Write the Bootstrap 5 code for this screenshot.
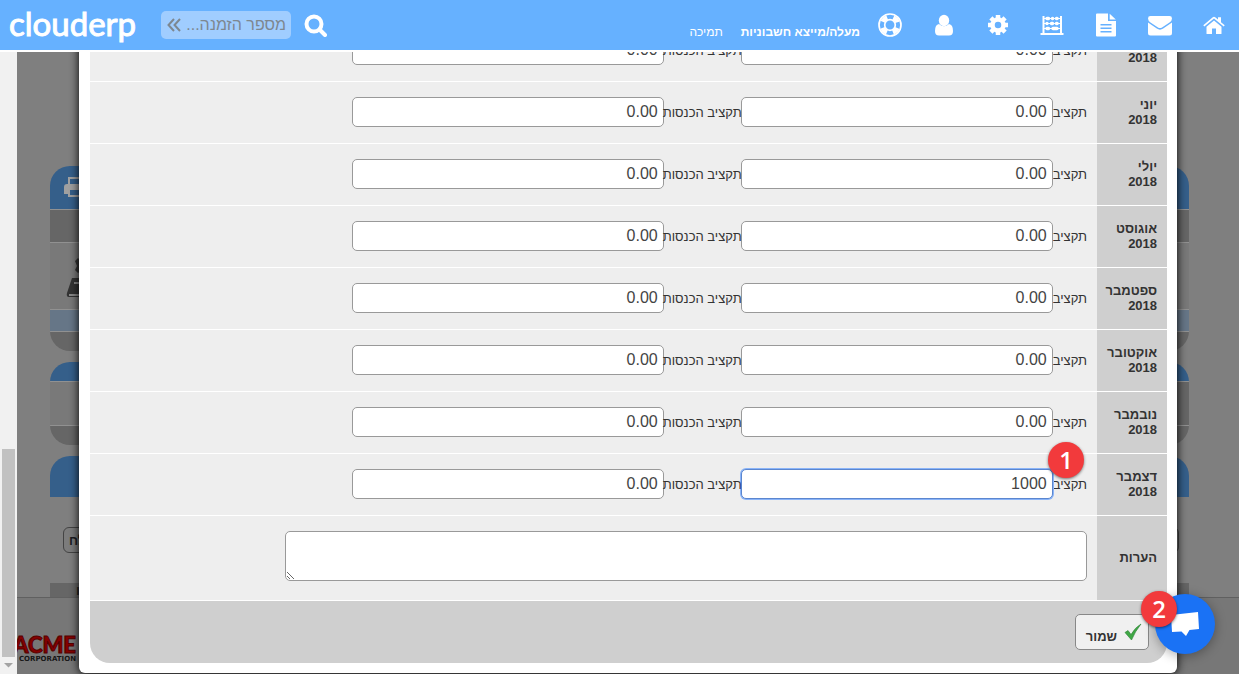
<!DOCTYPE html>
<html lang="he" dir="rtl">
<head>
<meta charset="utf-8">
<meta name="viewport" content="width=device-width, initial-scale=1">
<title>clouderp</title>
<link rel="stylesheet" href="https://cdn.jsdelivr.net/npm/bootstrap@5.3.0/dist/css/bootstrap.min.css">
<style>
body{font-family:"Liberation Sans",Arial,sans-serif;font-size:13px;line-height:15px;color:#333;background:#fff}
a{color:inherit;text-decoration:none}
.topbar{height:50px;background:#66b1ff;color:#fff;margin-bottom:2px;padding:0 13px 0 9px}
.icons{gap:30px}
.icons svg{width:24px;height:24px;display:block}
.menu-links{gap:18px;margin-right:18px;padding-top:14px;font-size:12px}
.find{gap:12px}
.find-box{width:130px;height:28px;background:#a0cdff;border-radius:5px;padding:0 5px;color:#7d8790}
.find-box input{border:0;background:transparent;font-size:16px;line-height:20px;padding:0;min-width:0;width:100px;color:#7d8790;outline:0}
.find-box input::placeholder{color:#7d8790;opacity:1}
.find-box button,.find-go{border:0;background:transparent;padding:0;color:inherit}
.logo{font:400 33px/40px Lato,sans-serif;-webkit-text-stroke:1px #fff;margin-right:26px;width:126px;padding-bottom:4px}
.scroll-area{min-height:0}
.scroll-track{width:17px;background:#f1f1f1;padding:0 2px}
.scroll-thumb{width:13px;height:208px;background:#c1c1c1}
.stage{background:#7f7f7f;display:grid;grid-template:minmax(0,1fr)/minmax(0,1fr);min-width:0}
.stage>*{grid-area:1/1;min-height:0}
.behind{padding-top:114px}
.panel{margin:0 50px 11px 33px;border-radius:20px;overflow:hidden}
.panel>div{border-bottom:1px solid #919191;background:#797979}
.panel>div:last-child{border:0}
.panel .blue{background:#355f8a;color:#a0a0a0}
.panel .dark,.dark-half{background:#666}
.panel .pale{background:#667687}
.panel.open-end{border-radius:20px 20px 0 0;margin-bottom:0}
.h-head{height:44px;padding-left:14px}.h-sub{height:33px}.h-body{height:67px}.h-strip{height:22px}.h-foot{height:19px}
.h-cap{height:20px}.h-mid{height:44px}.h-top{height:41px}
.ghost-btn{height:26px;border:1px solid #444;border-radius:6px;background:#7c7c7c;font-weight:bold;padding:0 5px;margin:30px 60px 30px 46px;color:#1d1d22}
.ghost-bar{height:14px;background:#666;margin:0 50px 0 33px;padding:0 26px;color:#222;font-weight:bold}
.ghost-foot{border-top:1px solid #606060;background:#777}
.acme{width:59px;padding-top:36px}
.acme b{display:block;font:900 22px/21px Lato,sans-serif;color:#850000;-webkit-text-stroke:1px #500}
.acme small{display:block;font:bold 7px/8px "DejaVu Sans",sans-serif;color:#171717}
.dialog-wrap{padding:0 62px 1px;overflow:hidden}
.dialog-box{background:#fff;border-radius:0 0 6px 6px;padding:0 10px 10px 11px;box-shadow:0 1px 10px #000}
.budget{width:100%;border-collapse:separate;border-spacing:0;table-layout:fixed}
.budget .month-col{width:70px}
.budget th{background:#cfcfcf;padding:0 10px 2px 6px;border-bottom:1px solid #fff;font-weight:bold;vertical-align:middle}
.budget td{background:#eee;padding:0 10px 2px;border-bottom:1px solid #fff;vertical-align:middle;position:relative}
.budget tr{height:62px}
.budget tr.notes{height:85px}
.budget .notes td{padding-bottom:4px}
.budget td label{white-space:nowrap;padding-top:2px}
.budget .money+label{margin:0 -1px;position:relative}
.money{width:312px;height:30px;border:1px solid #999;border-radius:5px;padding:0 5px;font-size:16px;line-height:20px;color:#444;background:#fff;text-align:right;direction:ltr;min-width:0;outline:0}
.money.current{border-color:#5b86cf;box-shadow:0 0 0 1px #8ab4f8}
.budget textarea{display:block;width:802px;max-width:100%;height:50px;border:1px solid #999;border-radius:5px;background:#fff;outline:0}
.save-bar{background:#cfcfcf;border-radius:0 0 20px 20px;height:62px;padding:0 18px}
.save{height:36px;border:1px solid #888;border-radius:5px;background:#f0f0f0;font-weight:bold;padding:0 6px 0 10px;gap:7px;color:#333}
.save span{padding-top:8px}
.step{position:absolute;width:36px;height:36px;border-radius:50%;background:#f23a3c;color:#fff;font:600 24px/36px "Open Sans",sans-serif;text-align:center;box-shadow:0 1px 3px #0008;z-index:3}
.step-one{right:13px;top:-12px}
.chat{position:absolute;right:24px;bottom:20px;width:60px;height:60px;border:0;border-radius:50%;background:#1a72f5;box-shadow:0 2px 12px #0005;padding:0;z-index:2}
.step-two{left:-14px;top:-3px}
</style>
</head>
<body class="vh-100 d-flex flex-column overflow-hidden">
<header class="topbar d-flex align-items-center flex-shrink-0">
  <nav class="icons d-flex align-items-center" aria-label="ראשי">
    <a href="#" aria-label="בית"><svg viewBox="0 0 24 24" fill="#fff"><path d="M12 7.500 19.500 13.700V20.500Q19.500 21 19 21H14V15.500H10V21H5Q4.500 21 4.500 20.500V13.700ZM1.300 12.200 10.800 4.300Q12 3.400 13.200 4.300L16 6.600V4.200H19V9.200L22.700 12.200 21.700 13.400 12 5.600 2.300 13.400Z"/></svg></a>
    <a href="#" aria-label="דואר"><svg viewBox="0 0 24 24" fill="#fff"><path d="M2.500 3h19Q24 3 24 5.400 24 7.700 21.500 9.400L14 14.500Q12 15.700 10 14.500L2.500 9.400Q0 7.500 0 5.400 0 3 2.500 3ZM0 9.500 8.800 15.600Q12 17.900 15.200 15.600L24 9.500V20Q24 22.500 21.500 22.500h-19Q0 22.500 0 20Z"/></svg></a>
    <a href="#" aria-label="מסמכים"><svg viewBox="0 0 24 24" fill="#fff"><path fill-rule="evenodd" d="M2 1.500Q2 .5 3 .5h11v7.500h8v14.500q0 1-1 1H3q-1 0-1-1ZM15.700.700 21.800 6.600H15.700ZM6.500 11v1.500h11V11Zm0 3.500V16h11v-1.500Zm0 3.500v1.500h11V18Z"/></svg></a>
    <a href="#" aria-label="הנהלת חשבונות"><svg viewBox="0 0 24 24" fill="none" stroke="#fff"><path stroke-width="2" d="M3.500 3v18M21 3v18M.5 21h23"/><path d="M3 5.500h18M3 10.500h18M3 15.500h18"/><path stroke-width="3.400" stroke-linecap="round" d="M7 5.500h1.500M12.500 5.500h.1M16.500 5.500h.6M7 10.500h0M11.500 10.500h1M16.500 10.500h.6M7 15.500h1.500M13 15.500h4"/></svg></a>
    <a href="#" aria-label="הגדרות"><svg viewBox="0 0 24 24" fill="none" stroke="#fff"><circle cx="12" cy="12" r="5.500" stroke-width="4.500"/><path stroke-width="4.500" d="M12 2v3M12 19v3M2 12h3M19 12h3M4.900 4.900 7 7M17 17l2.100 2.100M4.900 19.100 7 17M17 7l2.100-2.100"/></svg></a>
    <a href="#" aria-label="משתמש"><svg viewBox="0 0 24 24" fill="#fff"><ellipse cx="12" cy="7.500" rx="5.200" ry="5.700"/><path d="M7 11q5 4.500 10 0 4 .7 4 7 0 4.500-4 4.500H7q-4 0-4-4.500 0-6.300 4-7Z"/></svg></a>
    <a href="#" aria-label="עזרה"><svg viewBox="0 0 24 24" fill="none" stroke="#fff"><circle cx="12" cy="12" r="11" stroke-width="1.700"/><circle cx="12" cy="12" r="5.300" stroke-width="1.700"/><circle cx="12" cy="12" r="8" stroke-width="5" stroke-dasharray="6.300 6.260" stroke-dashoffset="-3.150"/></svg></a>
  </nav>
  <nav class="menu-links d-flex" aria-label="קישורים"><a href="#"><b>מעלה/מייצא חשבוניות</b></a><a href="#">תמיכה</a></nav>
  <form class="find d-flex align-items-center me-auto">
    <button type="button" class="find-go" aria-label="חיפוש"><svg class="d-block" width="24" height="24" viewBox="0 0 24 24" fill="none" stroke="#fff" stroke-width="4"><circle cx="11" cy="11" r="7.500"/><path stroke-linecap="round" d="m17 17 5 5"/></svg></button>
    <div class="find-box d-flex align-items-center justify-content-between"><input type="text" aria-label="מספר הזמנה" placeholder="מספר הזמנה..."><button type="button" aria-label="הבא"><svg class="d-block" width="16" height="16" viewBox="0 0 16 16" fill="none" stroke="currentColor" stroke-width="2"><path d="M8 2 2.500 8 8 14M14 2 8.500 8 14 14"/></svg></button></div>
  </form>
  <a href="#" class="logo text-start" dir="ltr">clouderp</a>
</header>

<div class="scroll-area d-flex flex-grow-1" dir="ltr">
  <div class="scroll-track d-flex flex-column justify-content-end flex-shrink-0"><div class="scroll-thumb"></div><svg width="13" height="17" viewBox="0 0 13 17"><path d="M2 6h9l-4.500 4.500Z" fill="#a3a3a3"/></svg></div>
  <main class="stage flex-grow-1 position-relative">
    <div class="behind d-flex flex-column overflow-hidden" aria-hidden="true">
      <div class="panel flex-shrink-0">
        <div class="blue h-head d-flex align-items-center"><svg width="30" height="24" viewBox="0 0 30 24"><path fill="none" stroke="#a0a0a0" stroke-width="2" d="M5 10V2h12l4 4v4M5 14v6h16v-6"/><path fill="#a0a0a0" d="M0 11q0-3 3-3h20q3 0 3 3v7h-4v-4H4v4H0Z"/></svg></div>
        <div class="dark h-sub"></div>
        <div class="h-body"><svg class="d-block" width="60" height="66" viewBox="0 0 60 66"><path fill="#333" d="m25 18 3-3 4 4v8l-4 3-3-3 2-4ZM22 35h20v19H19q-3 0-2-4Z"/><path stroke="#888" stroke-width="2" d="M24 40h14M19 52h22"/></svg></div>
        <div class="pale h-strip"></div>
        <div class="dark h-foot"></div>
      </div>
      <div class="panel flex-shrink-0">
        <div class="blue h-cap"></div><div class="h-mid d-flex"><span class="w-50"></span><span class="dark-half w-50"></span></div><div class="dark h-foot"></div>
      </div>
      <div class="panel open-end flex-shrink-0"><div class="blue h-top"></div></div>
      <div class="ghost-btn flex-shrink-0 d-flex align-items-center">לח</div>
      <div class="ghost-bar flex-shrink-0">ו</div>
      <div class="ghost-foot flex-grow-1"><div class="acme d-flex flex-column align-items-end"><b>ACME</b><small>CORPORATION</small></div></div>
    </div>

    <div class="dialog-wrap d-flex flex-column justify-content-end">
      <form class="dialog-box" dir="rtl">
        <table class="budget">
          <colgroup><col class="month-col"><col></colgroup>
          <tbody>
            <tr><th scope="row">מאי<br>2018</th><td><div class="d-flex align-items-center"><label for="e5">תקציב</label><input class="money" id="e5" value="0.00"><label for="i5">תקציב הכנסות</label><input class="money" id="i5" value="0.00"></div></td></tr>
            <tr><th scope="row">יוני<br>2018</th><td><div class="d-flex align-items-center"><label for="e6">תקציב</label><input class="money" id="e6" value="0.00"><label for="i6">תקציב הכנסות</label><input class="money" id="i6" value="0.00"></div></td></tr>
            <tr><th scope="row">יולי<br>2018</th><td><div class="d-flex align-items-center"><label for="e7">תקציב</label><input class="money" id="e7" value="0.00"><label for="i7">תקציב הכנסות</label><input class="money" id="i7" value="0.00"></div></td></tr>
            <tr><th scope="row">אוגוסט<br>2018</th><td><div class="d-flex align-items-center"><label for="e8">תקציב</label><input class="money" id="e8" value="0.00"><label for="i8">תקציב הכנסות</label><input class="money" id="i8" value="0.00"></div></td></tr>
            <tr><th scope="row">ספטמבר<br>2018</th><td><div class="d-flex align-items-center"><label for="e9">תקציב</label><input class="money" id="e9" value="0.00"><label for="i9">תקציב הכנסות</label><input class="money" id="i9" value="0.00"></div></td></tr>
            <tr><th scope="row">אוקטובר<br>2018</th><td><div class="d-flex align-items-center"><label for="e10">תקציב</label><input class="money" id="e10" value="0.00"><label for="i10">תקציב הכנסות</label><input class="money" id="i10" value="0.00"></div></td></tr>
            <tr><th scope="row">נובמבר<br>2018</th><td><div class="d-flex align-items-center"><label for="e11">תקציב</label><input class="money" id="e11" value="0.00"><label for="i11">תקציב הכנסות</label><input class="money" id="i11" value="0.00"></div></td></tr>
            <tr><th scope="row">דצמבר<br>2018</th><td><div class="d-flex align-items-center"><label for="e12">תקציב</label><input class="money current" id="e12" value="1000"><label for="i12">תקציב הכנסות</label><input class="money" id="i12" value="0.00"></div><span class="step step-one">1</span></td></tr>
            <tr class="notes"><th scope="row"><label for="notes">הערות</label></th><td><textarea id="notes"></textarea></td></tr>
          </tbody>
        </table>
        <div class="save-bar d-flex align-items-center">
          <button type="button" class="save d-flex align-items-center"><svg width="18" height="18" viewBox="0 0 18 18"><path d="M1 9.500 4 7.500 7 11.500Q11 4.500 17 1 11 8.500 7.500 17Z" fill="#3fa845" stroke="#2c8035" stroke-width=".6"/></svg><span>שמור</span></button>
        </div>
      </form>
    </div>
    <button type="button" class="chat" aria-label="צ'אט"><svg class="d-block mx-auto" width="30" height="30" viewBox="0 0 30 30"><path fill="#fff" d="M1 6 28 3 29 20 19.500 21 16 27 11.500 22.500 2 23Z"/></svg><span class="step step-two">2</span></button>
  </main>
</div>
<script src="https://cdn.jsdelivr.net/npm/bootstrap@5.3.0/dist/js/bootstrap.bundle.min.js"></script>
</body>
</html>
